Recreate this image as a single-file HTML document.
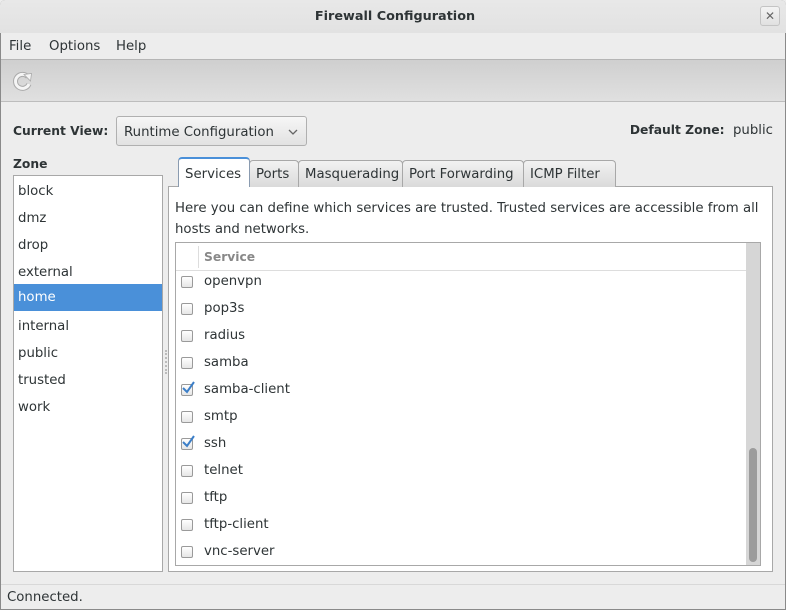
<!DOCTYPE html>
<html><head><meta charset="utf-8"><style>
*{box-sizing:border-box;margin:0;padding:0}
body{width:786px;height:610px;overflow:hidden;background:#ededed;font-family:"DejaVu Sans","Liberation Sans",sans-serif;font-size:13.3px;color:#2e3436;position:relative}
.a{position:absolute;white-space:nowrap}
.win{position:absolute;left:0;top:0;width:786px;height:610px;border:1px solid #8a8a8a;border-radius:5px 5px 0 0}
.title{left:0;top:0;width:786px;height:33px;background:linear-gradient(#e8e8e8,#e2e2e2);border-radius:5px 5px 0 0}
.toolbar{left:1px;top:59px;width:784px;height:43px;background:linear-gradient(#cfcfcf,#e0e0e0);border-top:1px solid #b5b5b5;border-bottom:1px solid #bdbdbd}
.b{font-weight:bold;font-size:12.3px}
.list{left:13px;top:175px;width:150px;height:397px;background:#fff;border:1px solid #a8a8a8}
.li{position:absolute;left:0;width:148px;height:27px;padding-left:4px;line-height:29px}
.tab{position:absolute;top:160px;height:27px;border:1px solid #a8a8a8;border-bottom:none;border-radius:4px 4px 0 0;background:linear-gradient(#f2f2f2,#dadada);line-height:28px;padding-left:6px}
.panel{left:168px;top:186px;width:605px;height:386px;background:#fff;border:1px solid #a8a8a8}
.tree{left:175px;top:242px;width:586px;height:324px;background:#fff;border:1px solid #a8a8a8}
.row{position:absolute;left:28px;height:20px;line-height:22px}
.cb{position:absolute;left:5px;width:12px;height:12px;border:1px solid #9a9a9a;border-radius:2px;background:linear-gradient(#fff,#e6e6e6)}
</style></head><body>
<div class="win"></div>
<div class="a title"></div>
<div class="a b" style="left:2px;width:786px;text-align:center;top:9px;font-size:12.8px">Firewall Configuration</div>
<div class="a" style="left:760px;top:6px;width:20px;height:20px;border:1px solid #c4c4c4;border-radius:3px;background:linear-gradient(#f4f4f4,#e0e0e0);text-align:center;line-height:18px;font-size:12px;color:#666">✕</div>
<div class="a" style="left:9px;top:39px">File</div>
<div class="a" style="left:49px;top:39px">Options</div>
<div class="a" style="left:116px;top:39px">Help</div>
<div class="a toolbar"></div>
<svg class="a" style="left:12px;top:70px" width="22" height="22" viewBox="0 0 22 22"><path d="M16 7 A7 7 0 1 0 17 14" fill="none" stroke="#aaa" stroke-width="5"/><path d="M16 7 A7 7 0 1 0 17 14" fill="none" stroke="#f5f5f5" stroke-width="3"/><path d="M12 4.5 L19.5 3.5 L18.5 11 Z" fill="#f5f5f5" stroke="#aaa" stroke-width="0.8"/></svg>
<div class="a b" style="left:13px;top:124px">Current View:</div>
<div class="a" style="left:116px;top:116px;width:191px;height:30px;border:1px solid #b0b0b0;border-radius:3px;background:linear-gradient(#f6f6f6,#e2e2e2);padding-left:7px;line-height:31px">Runtime Configuration<svg style="position:absolute;right:8px;top:12px" width="10" height="6"><path d="M1 1 L5 5 L9 1" fill="none" stroke="#666" stroke-width="1.3"/></svg></div>
<div class="a" style="right:13px;top:123px"><b class="b">Default Zone:</b>&nbsp; public</div>
<div class="a b" style="left:13px;top:157px">Zone</div>
<div class="a list">
<div class="li" style="top:1px">block</div><div class="li" style="top:28px">dmz</div><div class="li" style="top:55px">drop</div><div class="li" style="top:82px">external</div>
<div class="li" style="top:108px;background:#4a90d9;color:#fff;line-height:27px">home</div>
<div class="li" style="top:136px">internal</div><div class="li" style="top:163px">public</div><div class="li" style="top:190px">trusted</div><div class="li" style="top:217px">work</div>
</div>
<div class="a" style="left:165px;top:350px;width:2px;height:24px;border-left:2px dotted #bbb"></div>
<div class="a panel"></div>
<div class="tab" style="left:249px;width:50px">Ports</div>
<div class="tab" style="left:298px;width:105px">Masquerading</div>
<div class="tab" style="left:402px;width:122px">Port Forwarding</div>
<div class="tab" style="left:523px;width:93px">ICMP Filter</div>
<div class="tab" style="left:178px;top:157px;width:72px;height:30px;background:#fff;border-color:#8a9bb0;border-top:2px solid #4a90d9;line-height:31px">Services</div>
<div class="a" style="left:175px;top:198px;line-height:21px">Here you can define which services are trusted. Trusted services are accessible from all<br>hosts and networks.</div>
<div class="a tree">
<div class="a" style="left:0;top:0;width:570px;height:28px;border-bottom:1px solid #ddd"></div>
<div class="a" style="left:22px;top:3px;height:22px;border-left:1px solid #ddd"></div>
<div class="a b" style="left:28px;top:7px;color:#888">Service</div>
<div class="a" style="left:570px;top:0;width:14px;height:322px;background:#d6d6d6"></div>
<div class="a" style="left:573px;top:205px;width:8px;height:114px;background:#9c9c9c;border-radius:4px"></div>
<div class="cb" style="top:33px"></div><div class="row" style="top:28px">openvpn</div>
<div class="cb" style="top:60px"></div><div class="row" style="top:55px">pop3s</div>
<div class="cb" style="top:87px"></div><div class="row" style="top:82px">radius</div>
<div class="cb" style="top:114px"></div><div class="row" style="top:109px">samba</div>
<div class="cb" style="top:141px"></div><svg class="a" style="left:5px;top:137px" width="14" height="14"><path d="M2 8 L6 12 L13 2" fill="none" stroke="#3c7fc8" stroke-width="2"/></svg><div class="row" style="top:136px">samba-client</div>
<div class="cb" style="top:168px"></div><div class="row" style="top:163px">smtp</div>
<div class="cb" style="top:195px"></div><svg class="a" style="left:5px;top:191px" width="14" height="14"><path d="M2 8 L6 12 L13 2" fill="none" stroke="#3c7fc8" stroke-width="2"/></svg><div class="row" style="top:190px">ssh</div>
<div class="cb" style="top:222px"></div><div class="row" style="top:217px">telnet</div>
<div class="cb" style="top:249px"></div><div class="row" style="top:244px">tftp</div>
<div class="cb" style="top:276px"></div><div class="row" style="top:271px">tftp-client</div>
<div class="cb" style="top:303px"></div><div class="row" style="top:298px">vnc-server</div>
</div>
<div class="a" style="left:1px;top:584px;width:784px;border-top:1px solid #d8d8d8"></div>
<div class="a" style="left:7px;top:590px">Connected.</div>
</body></html>
